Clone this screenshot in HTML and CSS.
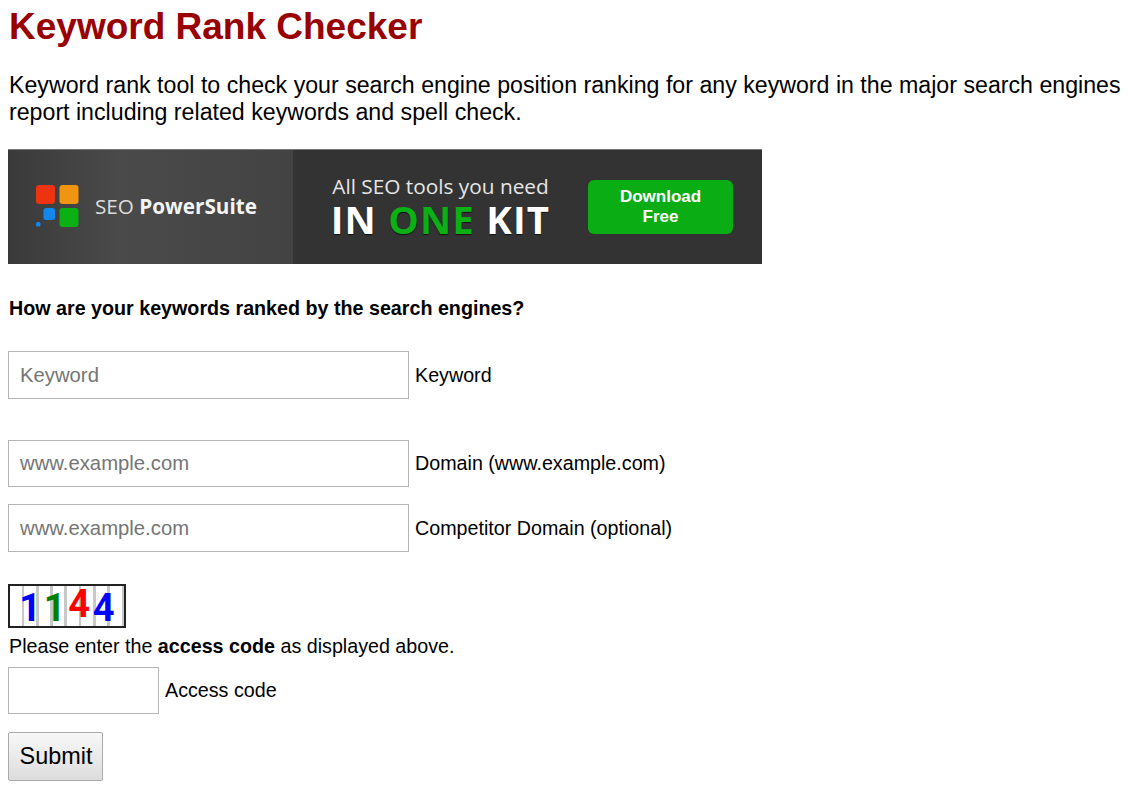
FILE: index.html
```html
<!doctype html>
<html lang="en">
  <head>
    <meta charset="UTF-8" />
    <title>Keyword Rank Checker</title>
    <link rel="stylesheet" href="styles.css">
  </head>

  <body>
    <h1 class="title">Keyword Rank Checker</h1>

    <p class="intro">Keyword rank tool to check your search engine position ranking for any keyword in the major search engines<br>report including related keywords and spell check.</p>

    <!-- Banner -->
    <div class="banner">
      <div class="banner-left">
        <svg class="logo" width="44" height="44" viewBox="0 0 44 44">
          <rect x="0" y="0" width="19" height="19" rx="3" fill="#ee3311" />
          <rect x="23.5" y="0" width="19" height="19" rx="3" fill="#f09511" />
          <rect x="7.5" y="23" width="11.5" height="12" rx="2.5" fill="#1188ee" />
          <rect x="23.5" y="23" width="19" height="19" rx="3" fill="#0bb015" />
          <rect x="0" y="37" width="4.5" height="4.5" rx="1.5" fill="#1188ee" />
        </svg>
        <span class="brand">SEO <b>PowerSuite</b></span>
      </div>
      <div class="banner-right">
        <div class="slogan">
          <div class="slogan-small">All SEO tools you need</div>
          <div class="slogan-big">IN <span class="green">ONE</span> KIT</div>
        </div>
        <div class="download">Download<br>Free</div>
      </div>
    </div>

    <form class="form">
      <p class="question">How are your keywords ranked by the search engines?</p>

      <div class="field field-keyword">
        <input class="input" type="text" placeholder="Keyword">
        <label class="label">Keyword</label>
      </div>

      <div class="field field-domain">
        <input class="input input-short" type="text" placeholder="www.example.com">
        <label class="label">Domain (www.example.com)</label>
      </div>

      <div class="field field-competitor">
        <input class="input" type="text" placeholder="www.example.com">
        <label class="label">Competitor Domain (optional)</label>
      </div>

      <div class="captcha">
        <span class="digit blue">1</span><span class="digit dark-green">1</span><span class="digit red">4</span><span class="digit blue">4</span>
      </div>
      <p class="hint">Please enter the <b>access code</b> as displayed above.</p>

      <div class="field">
        <input class="input input-short input-code" type="text">
        <label class="label">Access code</label>
      </div>

      <button class="submit" type="button">Submit</button>
    </form>
  </body>
</html>
```

FILE: styles.css
```css
body {
  margin: 0;
  padding: 0 0 0 8px;
  width: 1132px;
  overflow: hidden;
  color: #000;
  font-family: "Liberation Sans", Arial, sans-serif;
  font-size: 20px;
}

.title {
  margin: 0;
  padding-top: 6px;
  padding-left: 1px;
  color: #990000;
  font-size: 37px;
  line-height: 42px;
  font-weight: bold;
}

.intro {
  margin: 24px 0 0;
  padding-left: 1px;
  white-space: nowrap;
  font-size: 23.18px;
  line-height: 27px;
}

.banner {
  display: flex;
  width: 754px;
  height: 115px;
  margin-top: 23px;
  border-top: 1px solid #777;
  box-sizing: border-box;
  color: #fff;
  font-family: "Open Sans", sans-serif;
}

.banner-left {
  display: flex;
  align-items: center;
  gap: 15px;
  width: 285px;
  padding-left: 28px;
  box-sizing: border-box;
  background: linear-gradient(90deg, #3a3a3a, #4a4a4a 40%, #434343);
}

.logo {
  flex: none;
  margin-top: -1px;
}

.brand {
  margin-top: -2px;
  color: #ddd;
  font-size: 20.7px;
}

.brand b {
  color: #f4f4f4;
}

.banner-right {
  display: flex;
  flex: 1;
  align-items: center;
  padding-left: 35px;
  background: #333;
}

.slogan {
  width: 225px;
  white-space: nowrap;
  text-align: center;
}

.slogan-small {
  color: #e6e6e6;
  font-size: 20.8px;
  line-height: 24px;
}

.slogan-big {
  font-size: 38.4px;
  line-height: 42px;
  font-weight: bold;
  letter-spacing: 1.2px;
  text-shadow: 0 1px 1px #111;
}

.green {
  color: #0bb015;
}

.download {
  width: 145px;
  margin-left: 35px;
  padding: 7px 0;
  border-radius: 6px;
  background: #0aad13;
  font-family: "Liberation Sans", Arial, sans-serif;
  font-size: 17px;
  font-weight: bold;
  line-height: 20px;
  text-align: center;
}

.question {
  margin: 33px 0 0;
  padding-left: 1px;
  font-size: 19.7px;
  line-height: 22px;
  font-weight: bold;
}

.field {
  display: flex;
  align-items: center;
  gap: 6px;
}

.field-keyword {
  margin-top: 32px;
}

.field-domain {
  margin-top: 41px;
}

.field-competitor {
  margin-top: 17px;
}

.input {
  width: 401px;
  height: 48px;
  padding: 0 11px;
  box-sizing: border-box;
  border: 1px solid #b5b5b5;
  background: #fff;
  font-family: "Liberation Sans", Arial, sans-serif;
  font-size: 20.3px;
}

.input::placeholder {
  color: #757575;
  opacity: 1;
}

.input-short {
  height: 47px;
}

.input-code {
  width: 151px;
}

.label {
  font-size: 19.7px;
}

.captcha {
  display: flex;
  justify-content: center;
  width: 118px;
  height: 44px;
  margin-top: 32px;
  box-sizing: border-box;
  border: 2px solid #222;
  background: repeating-linear-gradient(90deg, #fff 0, #fff 11.5px, #c8c8c8 11.5px, #c8c8c8 14.3px);
  font-family: Roboto, sans-serif;
  font-size: 38px;
  font-weight: bold;
  line-height: 44px;
}

.digit {
  width: 24.5px;
  text-align: center;
}

.blue {
  color: #0000ff;
}

.dark-green {
  color: #008000;
}

.red {
  color: #ff0000;
  margin-top: -4px;
}

.hint {
  margin: 6px 0 9px;
  padding-left: 1px;
  font-size: 19.7px;
  line-height: 24px;
}

.submit {
  display: block;
  width: 95px;
  height: 49px;
  margin-top: 18px;
  padding: 0 0 0 1px;
  border: 1px solid #aaa;
  border-radius: 2px;
  background: linear-gradient(#f8f8f8, #dcdcdc);
  color: #000;
  font-family: "Liberation Sans", Arial, sans-serif;
  font-size: 23.4px;
}
```
